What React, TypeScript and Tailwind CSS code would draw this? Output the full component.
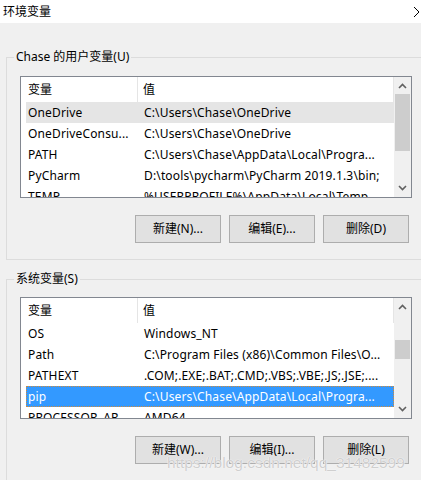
import React from "react";

type Row = { name: string; value: string; state?: "hover" | "selected" };

const userRows: Row[] = [
  { name: "OneDrive", value: "C:\\Users\\Chase\\OneDrive", state: "hover" },
  { name: "OneDriveConsu...", value: "C:\\Users\\Chase\\OneDrive" },
  { name: "PATH", value: "C:\\Users\\Chase\\AppData\\Local\\Progra..." },
  { name: "PyCharm", value: "D:\\tools\\pycharm\\PyCharm 2019.1.3\\bin;" },
  { name: "TEMP", value: "%USERPROFILE%\\AppData\\Local\\Temp" },
];

const sysRows: Row[] = [
  { name: "OS", value: "Windows_NT" },
  { name: "Path", value: "C:\\Program Files (x86)\\Common Files\\O..." },
  { name: "PATHEXT", value: ".COM;.EXE;.BAT;.CMD;.VBS;.VBE;.JS;.JSE;...." },
  { name: "pip", value: "C:\\Users\\Chase\\AppData\\Local\\Progra...", state: "selected" },
  { name: "PROCESSOR_AR...", value: "AMD64" },
];

const font = { fontFamily: '"Noto Sans", "Noto Sans CJK SC", sans-serif' };

function ListView({ rows, thumbTop, thumbH }: { rows: Row[]; thumbTop: number; thumbH: number }) {
  return (
    <div className="ml-[13px] w-[392px] h-[122px] border border-[#828790] bg-white flex overflow-hidden">
      <div className="flex-1 flex flex-col pl-[5px] overflow-hidden">
        <div className="h-[25px] shrink-0 flex">
          <div className="w-[112px] flex items-center pl-[2px] border-r border-[#e5e5e5]">变量</div>
          <div className="flex-1 flex items-center pl-[5px] border-r border-[#e5e5e5]">值</div>
        </div>
        {rows.map((r) => (
          <div
            key={r.name}
            className={
              "h-[21px] shrink-0 flex items-center whitespace-nowrap tracking-[0.15px] " +
              (r.state === "hover"
                ? "bg-[#e5e5e5]"
                : r.state === "selected"
                ? "bg-[#3399ff] text-white outline outline-1 outline-dotted outline-[#d08a3a] -outline-offset-1"
                : "")
            }
          >
            <div className="w-[112px] pl-[2px] overflow-hidden">{r.name}</div>
            <div className="flex-1 pl-[6px] overflow-hidden">{r.value}</div>
          </div>
        ))}
      </div>
      <div className="w-[17px] shrink-0 bg-[#f0f0f0] relative flex flex-col items-center">
        <svg width="9" height="6" viewBox="0 0 9 6" className="mt-[6px]">
          <polyline points="1,5 4.5,1.5 8,5" fill="none" stroke="#606060" strokeWidth="1.6" />
        </svg>
        <div className="absolute left-[1px] w-[15px] bg-[#cdcdcd]" style={{ top: thumbTop, height: thumbH }} />
        <svg width="9" height="6" viewBox="0 0 9 6" className="mt-auto mb-[6px]">
          <polyline points="1,1 4.5,4.5 8,1" fill="none" stroke="#606060" strokeWidth="1.6" />
        </svg>
      </div>
    </div>
  );
}

function Buttons({ labels }: { labels: string[] }) {
  return (
    <div className="flex gap-[8px] ml-[128px] mt-[17px]">
      {labels.map((l) => (
        <div
          key={l}
          className="w-[86px] h-[28px] bg-[#e1e1e1] border border-[#adadad] flex items-center justify-center"
        >
          {l}
        </div>
      ))}
    </div>
  );
}

function Group({ label, children, className }: { label: string; children: React.ReactNode; className?: string }) {
  return (
    <div className={"relative ml-[6px] w-[430px] border border-[#dcdcdc] " + (className || "")}>
      <div className="absolute -top-[9px] left-[7px] bg-[#f0f0f0] px-[2px] leading-[16px]">{label}</div>
      {children}
    </div>
  );
}

export default function App() {
  return (
    <div className="w-[421px] h-[480px] bg-[#f0f0f0] overflow-hidden relative text-[12px] text-black" style={font}>
      <div className="h-[23px] bg-white flex items-center justify-between pl-[3px]">
        <span className="leading-[16px]">环境变量</span>
        <svg width="8" height="12" viewBox="0 0 8 12" className="mr-0">
          <polyline points="1,1 6,6 1,11" fill="none" stroke="#000" strokeWidth="1" />
        </svg>
      </div>
      <Group label="Chase 的用户变量(U)" className="mt-[34px] pt-[18px] pb-[16px]">
        <ListView rows={userRows} thumbTop={17} thumbH={57} />
        <Buttons labels={["新建(N)...", "编辑(E)...", "删除(D)"]} />
      </Group>
      <Group label="系统变量(S)" className="mt-[19px] pt-[17px] pb-[16px]">
        <ListView rows={sysRows} thumbTop={42} thumbH={19} />
        <Buttons labels={["新建(W)...", "编辑(I)...", "删除(L)"]} />
      </Group>
      <div
        className="absolute left-[167px] top-[451px] text-[15.5px] text-[#cfcfcf] whitespace-nowrap"
        style={{ fontFamily: '"Liberation Sans", Arial, sans-serif', textShadow: "0 0 1px #fff, 0 0 1px #fff" }}
      >
        https://blog.csdn.net/qq_31482599
      </div>
    </div>
  );
}
